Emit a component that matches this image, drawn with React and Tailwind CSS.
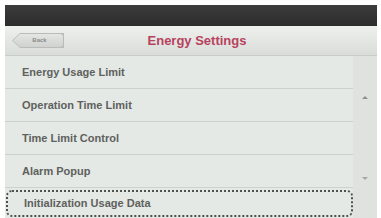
import React from 'react'

const rows = [
  "Energy Usage Limit",
  "Operation Time Limit",
  "Time Limit Control",
  "Alarm Popup",
]

function App() {
  return (
    <div className="w-[381px] h-[218px] bg-white pt-[5px] pl-[5px] pr-[4px] overflow-hidden" style={{ fontFamily: '"Liberation Sans", Arial, sans-serif' }}>
      <div className="h-full flex flex-col bg-[#e5e9e5]">
        {/* top dark bar */}
        <div className="h-[21px] bg-gradient-to-b from-[#3c3c3c] to-[#2c2c2c] shrink-0" />

        {/* header */}
        <div className="h-[30px] shrink-0 flex items-center relative bg-gradient-to-b from-[#eef0ee] to-[#d9ddd9] border-b border-[#c9cdc9]">
          <div className="ml-[7px] h-[15px] w-[52px] relative">
            <div className="absolute inset-0 bg-[#b9bcb9] [clip-path:polygon(8px_0,100%_0,100%_100%,8px_100%,0_50%)]" />
            <div className="absolute inset-[1px] bg-gradient-to-b from-[#e4e6e4] to-[#cfd2cf] [clip-path:polygon(7px_0,100%_0,100%_100%,7px_100%,0_50%)] rounded-r-[3px] flex items-center justify-center">
              <span className="text-[6px] font-bold text-[#8a8d8a] pl-[3px]">Back</span>
            </div>
          </div>
          <div className="absolute inset-0 flex items-center justify-center pointer-events-none">
            <span className="text-[13px] font-bold text-[#b7425e] ml-[12px]">Energy Settings</span>
          </div>
        </div>

        {/* list + scrollbar */}
        <div className="flex-1 flex">
          <div className="flex-1 flex flex-col">
            {rows.map((r) => (
              <div key={r} className="h-[33px] flex items-center pl-[17px] border-b border-[#cdd1cd] text-[11px] text-[#5e615e] font-semibold">
                {r}
              </div>
            ))}
            <div className="h-[27px] mt-[2px] ml-[1px] flex items-center pl-[16px] border-2 border-dotted border-[#4e514e] rounded-[6px] text-[11px] text-[#5e615e] font-semibold">
              Initialization Usage Data
            </div>
          </div>
          <div className="w-[24px] bg-[#dfe2df] flex flex-col items-center">
            <div className="mt-[40px] w-0 h-0 border-l-[3px] border-r-[3px] border-b-[3px] border-l-transparent border-r-transparent border-b-[#8e918e]" />
            <div className="mt-[78px] w-0 h-0 border-l-[3px] border-r-[3px] border-t-[3px] border-l-transparent border-r-transparent border-t-[#a4a7a4]" />
          </div>
        </div>
      </div>
    </div>
  )
}

export default App
